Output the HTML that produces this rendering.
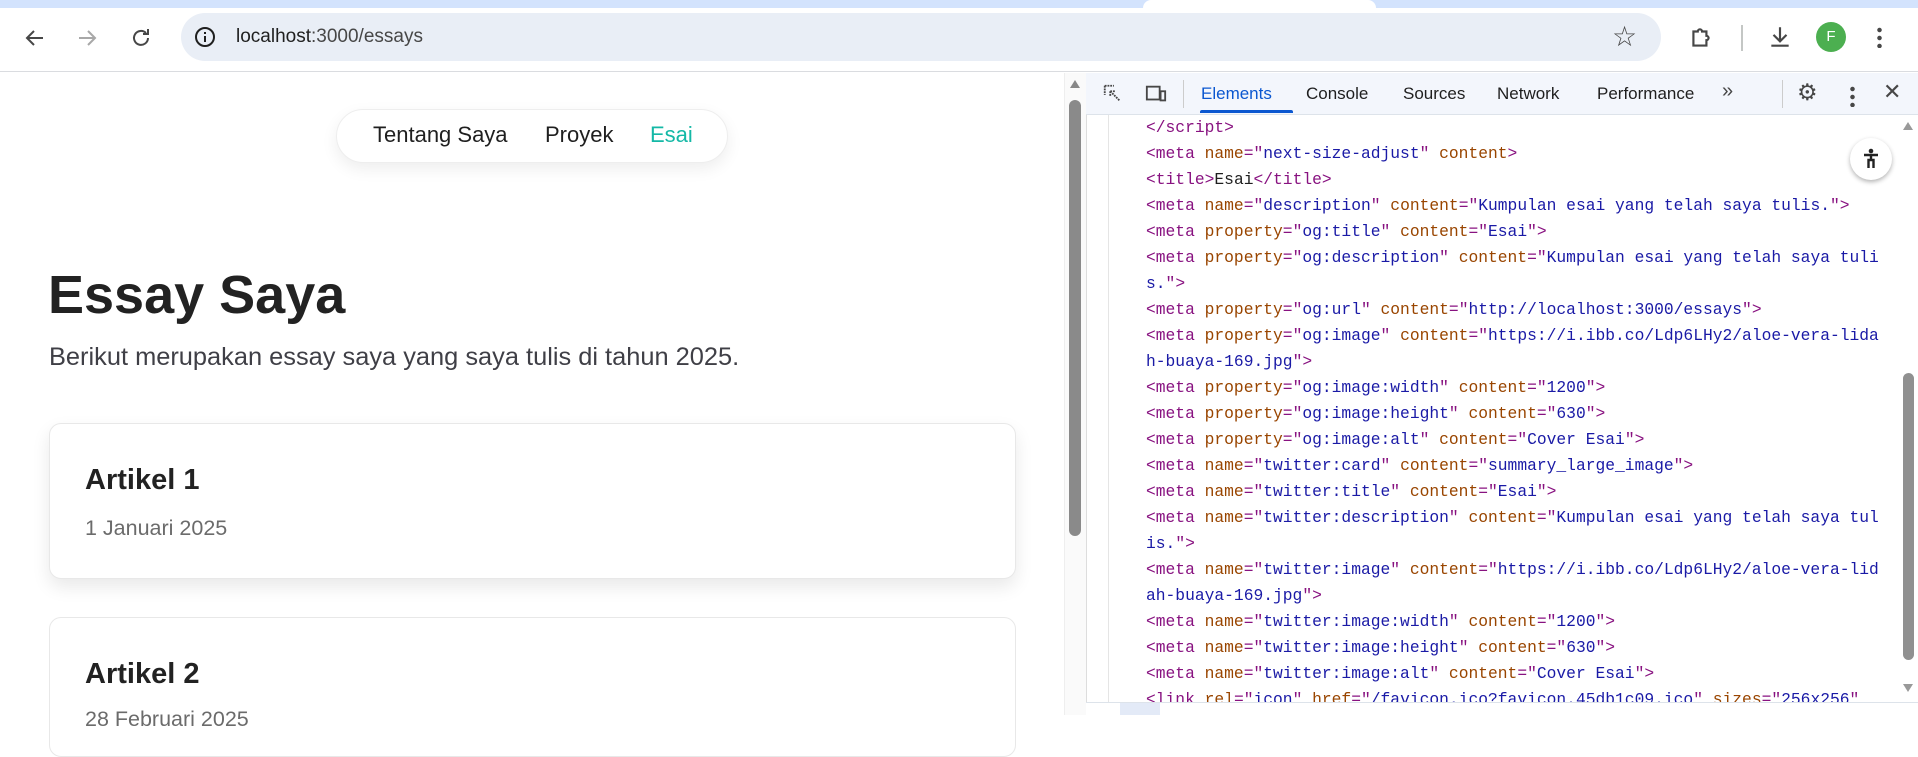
<!DOCTYPE html>
<html><head><meta charset="utf-8"><style>
*{margin:0;padding:0;box-sizing:border-box}
body{width:1918px;height:715px;overflow:hidden;background:#fff;font-family:"Liberation Sans",sans-serif;position:relative}
.abs{position:absolute}
.code{position:absolute;left:1146px;font-family:"Liberation Mono",monospace;font-size:16.3px;white-space:pre;color:#1f1f1f;line-height:26px}
.t{color:#881280}.a{color:#994500}.v{color:#1a1aa6}
.tab{position:absolute;top:84px;font-size:17px;color:#1f1f1f}
</style></head><body>
<div class="abs" style="left:0;top:0;width:1918px;height:8px;background:#d3e3fd"></div>
<div class="abs" style="left:1143px;top:0;width:233px;height:8px;background:#fff;border-radius:8px 8px 0 0"></div>
<div class="abs" style="left:0;top:8px;width:1918px;height:64px;background:#fff;border-bottom:1px solid #dadce0"></div>
<svg class="abs" style="left:20px;top:26px" width="30" height="24" viewBox="0 0 24 24"><path d="M20 12H5M11 5l-7 7 7 7" stroke="#474747" stroke-width="2" fill="none"/></svg>
<svg class="abs" style="left:72px;top:26px" width="30" height="24" viewBox="0 0 24 24"><path d="M4 12h15M13 5l7 7-7 7" stroke="#a8a8a8" stroke-width="2" fill="none"/></svg>
<svg class="abs" style="left:128px;top:26px" width="26" height="24" viewBox="0 0 24 24"><path d="M19 12a7 7 0 1 1-2-5M19 3v5h-5" stroke="#474747" stroke-width="2" fill="none"/></svg>
<div class="abs" style="left:181px;top:13px;width:1480px;height:48px;background:#e9eef6;border-radius:24px"></div>
<svg class="abs" style="left:193px;top:25px" width="24" height="24" viewBox="0 0 24 24"><circle cx="12" cy="12" r="9" stroke="#1f1f1f" stroke-width="2" fill="none"/><path d="M12 11v6M12 7v2" stroke="#1f1f1f" stroke-width="2"/></svg>
<div class="abs" style="left:236px;top:26px;font-size:19px;color:#1f1f1f">localhost<span style="color:#474747">:3000/essays</span></div>
<div class="abs" style="left:1612px;top:20px;font-size:28px;color:#474747">☆</div>
<svg class="abs" style="left:1688px;top:25px" width="26" height="26" viewBox="0 0 24 24"><path d="M5 6h4a2 2 0 0 1 4 0h4v4a2 2 0 0 1 0 4v5H5z" stroke="#474747" stroke-width="2" fill="none"/></svg>
<div class="abs" style="left:1741px;top:25px;width:2px;height:26px;background:#c4c7c5"></div>
<svg class="abs" style="left:1767px;top:24px" width="26" height="26" viewBox="0 0 24 24"><path d="M12 3v12M6 10l6 6 6-6M4 20h16" stroke="#474747" stroke-width="2" fill="none"/></svg>
<div class="abs" style="left:1816px;top:22px;width:30px;height:30px;border-radius:50%;background:#4caf50;color:#fff;font-size:15px;text-align:center;line-height:30px">F</div>
<div class="abs" style="left:1877px;top:26px;width:5px;height:22px;background:radial-gradient(circle,#474747 2px,transparent 2.5px) 0 0/5px 8px"></div>
<div class="abs" style="left:336px;top:109px;width:392px;height:54px;border-radius:27px;border:1px solid #eee;box-shadow:0 6px 16px rgba(0,0,0,.07);background:#fff"></div>
<div class="abs" style="left:373px;top:122px;font-size:22px;color:#1f1f1f">Tentang Saya</div>
<div class="abs" style="left:545px;top:122px;font-size:22px;color:#1f1f1f">Proyek</div>
<div class="abs" style="left:650px;top:122px;font-size:22px;color:#14b8a6">Esai</div>
<div class="abs" style="left:48px;top:264px;font-size:54px;font-weight:bold;color:#222">Essay Saya</div>
<div class="abs" style="left:49px;top:343px;font-size:25.4px;color:#3f3f46">Berikut merupakan essay saya yang saya tulis di tahun 2025.</div>
<div class="abs" style="left:49px;top:423px;width:967px;height:156px;border:1px solid #e8e8e8;border-radius:12px;box-shadow:0 8px 18px rgba(0,0,0,.09);background:#fff"></div>
<div class="abs" style="left:85px;top:464px;font-size:29px;font-weight:bold;color:#222">Artikel 1</div>
<div class="abs" style="left:85px;top:516px;font-size:21.5px;color:#6b6b6b">1 Januari 2025</div>
<div class="abs" style="left:49px;top:617px;width:967px;height:140px;border:1px solid #e8e8e8;border-radius:12px;background:#fff"></div>
<div class="abs" style="left:85px;top:658px;font-size:29px;font-weight:bold;color:#222">Artikel 2</div>
<div class="abs" style="left:85px;top:707px;font-size:21.5px;color:#6b6b6b">28 Februari 2025</div>
<div class="abs" style="left:1064px;top:73px;width:22px;height:642px;background:#fafafa;border-left:1px solid #eee"></div>
<div class="abs" style="left:1070px;top:80px;width:0;height:0;border-left:5px solid transparent;border-right:5px solid transparent;border-bottom:8px solid #888"></div>
<div class="abs" style="left:1069px;top:100px;width:12px;height:436px;border-radius:6px;background:#8a8a8a"></div>
<div class="abs" style="left:1086px;top:73px;width:832px;height:642px;background:#fff;border-left:1px solid #ddd"></div>
<div class="abs" style="left:1086px;top:73px;width:832px;height:42px;background:#f3f6fc;border-bottom:1px solid #dde3ea"></div>
<svg class="abs" style="left:1101px;top:83px" width="24" height="22" viewBox="0 0 24 24"><path d="M3 3h10M3 3v10M9 9l10 10M9 9h6M9 9v6" stroke="#474747" stroke-width="2" fill="none" stroke-dasharray="2 1"/></svg>
<svg class="abs" style="left:1143px;top:83px" width="26" height="22" viewBox="0 0 24 24"><rect x="2" y="4" width="14" height="14" stroke="#474747" stroke-width="2" fill="none"/><rect x="17" y="9" width="5" height="10" stroke="#474747" stroke-width="2" fill="none"/></svg>
<div class="abs" style="left:1183px;top:80px;width:1px;height:28px;background:#ccc"></div>
<div class="tab" style="left:1201px;color:#0b57d0">Elements</div>
<div class="abs" style="left:1200px;top:110px;width:93px;height:3px;background:#0b57d0;border-radius:2px 2px 0 0"></div>
<div class="tab" style="left:1306px">Console</div>
<div class="tab" style="left:1403px">Sources</div>
<div class="tab" style="left:1497px">Network</div>
<div class="tab" style="left:1597px">Performance</div>
<div class="tab" style="left:1722px;font-size:20px;top:80px;color:#474747">»</div>
<div class="abs" style="left:1782px;top:80px;width:1px;height:28px;background:#ccc"></div>
<div class="tab" style="left:1797px;top:79px;font-size:23px;color:#474747">⚙</div>
<div class="abs" style="left:1850px;top:85px;width:5px;height:22px;background:radial-gradient(circle,#474747 2px,transparent 2.5px) 0 0/5px 8px"></div>
<div class="tab" style="left:1883px;top:79px;font-size:22px;color:#474747">✕</div>
<div class="abs" style="left:1108px;top:115px;width:1px;height:588px;background:#e5e5e5"></div>
<div class="code" style="top:115px"><span class="t">&lt;/script&gt;</span>
<span class="t">&lt;meta </span><span class="a">name</span><span class="t">="</span><span class="v">next-size-adjust</span><span class="t">" </span><span class="a">content</span><span class="t">&gt;</span>
<span class="t">&lt;title&gt;</span>Esai<span class="t">&lt;/title&gt;</span>
<span class="t">&lt;meta </span><span class="a">name</span><span class="t">="</span><span class="v">description</span><span class="t">" </span><span class="a">content</span><span class="t">="</span><span class="v">Kumpulan esai yang telah saya tulis.</span><span class="t">"&gt;</span>
<span class="t">&lt;meta </span><span class="a">property</span><span class="t">="</span><span class="v">og:title</span><span class="t">" </span><span class="a">content</span><span class="t">="</span><span class="v">Esai</span><span class="t">"&gt;</span>
<span class="t">&lt;meta </span><span class="a">property</span><span class="t">="</span><span class="v">og:description</span><span class="t">" </span><span class="a">content</span><span class="t">="</span><span class="v">Kumpulan esai yang telah saya tuli</span>
<span class="v">s.</span><span class="t">"&gt;</span>
<span class="t">&lt;meta </span><span class="a">property</span><span class="t">="</span><span class="v">og:url</span><span class="t">" </span><span class="a">content</span><span class="t">="</span><span class="v">http://localhost:3000/essays</span><span class="t">"&gt;</span>
<span class="t">&lt;meta </span><span class="a">property</span><span class="t">="</span><span class="v">og:image</span><span class="t">" </span><span class="a">content</span><span class="t">="</span><span class="v">https://i.ibb.co/Ldp6LHy2/aloe-vera-lida</span>
<span class="v">h-buaya-169.jpg</span><span class="t">"&gt;</span>
<span class="t">&lt;meta </span><span class="a">property</span><span class="t">="</span><span class="v">og:image:width</span><span class="t">" </span><span class="a">content</span><span class="t">="</span><span class="v">1200</span><span class="t">"&gt;</span>
<span class="t">&lt;meta </span><span class="a">property</span><span class="t">="</span><span class="v">og:image:height</span><span class="t">" </span><span class="a">content</span><span class="t">="</span><span class="v">630</span><span class="t">"&gt;</span>
<span class="t">&lt;meta </span><span class="a">property</span><span class="t">="</span><span class="v">og:image:alt</span><span class="t">" </span><span class="a">content</span><span class="t">="</span><span class="v">Cover Esai</span><span class="t">"&gt;</span>
<span class="t">&lt;meta </span><span class="a">name</span><span class="t">="</span><span class="v">twitter:card</span><span class="t">" </span><span class="a">content</span><span class="t">="</span><span class="v">summary_large_image</span><span class="t">"&gt;</span>
<span class="t">&lt;meta </span><span class="a">name</span><span class="t">="</span><span class="v">twitter:title</span><span class="t">" </span><span class="a">content</span><span class="t">="</span><span class="v">Esai</span><span class="t">"&gt;</span>
<span class="t">&lt;meta </span><span class="a">name</span><span class="t">="</span><span class="v">twitter:description</span><span class="t">" </span><span class="a">content</span><span class="t">="</span><span class="v">Kumpulan esai yang telah saya tul</span>
<span class="v">is.</span><span class="t">"&gt;</span>
<span class="t">&lt;meta </span><span class="a">name</span><span class="t">="</span><span class="v">twitter:image</span><span class="t">" </span><span class="a">content</span><span class="t">="</span><span class="v">https://i.ibb.co/Ldp6LHy2/aloe-vera-lid</span>
<span class="v">ah-buaya-169.jpg</span><span class="t">"&gt;</span>
<span class="t">&lt;meta </span><span class="a">name</span><span class="t">="</span><span class="v">twitter:image:width</span><span class="t">" </span><span class="a">content</span><span class="t">="</span><span class="v">1200</span><span class="t">"&gt;</span>
<span class="t">&lt;meta </span><span class="a">name</span><span class="t">="</span><span class="v">twitter:image:height</span><span class="t">" </span><span class="a">content</span><span class="t">="</span><span class="v">630</span><span class="t">"&gt;</span>
<span class="t">&lt;meta </span><span class="a">name</span><span class="t">="</span><span class="v">twitter:image:alt</span><span class="t">" </span><span class="a">content</span><span class="t">="</span><span class="v">Cover Esai</span><span class="t">"&gt;</span>
<span class="t">&lt;link </span><span class="a">rel</span><span class="t">="</span><span class="v">icon</span><span class="t">" </span><span class="a">href</span><span class="t">="</span><span class="v">/favicon.ico?favicon.45db1c09.ico</span><span class="t">" </span><span class="a">sizes</span><span class="t">="</span><span class="v">256x256</span><span class="t">"</span></div>
<div class="abs" style="left:1086px;top:702px;width:832px;height:13px;background:#fff;border-top:1px solid #dde3ea"></div>
<div class="abs" style="left:1120px;top:703px;width:40px;height:12px;background:#e3eaf7"></div>
<div class="abs" style="left:1850px;top:138px;width:42px;height:42px;border-radius:50%;background:#fff;box-shadow:0 2px 5px rgba(0,0,0,.3)"></div>
<svg class="abs" style="left:1859px;top:147px" width="24" height="24" viewBox="0 0 24 24"><circle cx="12" cy="4" r="2.3" fill="#222"/><path d="M5 8h14M12 8v6M9.5 21v-8h5v8" stroke="#222" stroke-width="2.4" fill="none"/></svg>
<div class="abs" style="left:1903px;top:122px;width:0;height:0;border-left:5px solid transparent;border-right:5px solid transparent;border-bottom:8px solid #999"></div>
<div class="abs" style="left:1903px;top:373px;width:11px;height:287px;border-radius:6px;background:#909090"></div>
<div class="abs" style="left:1903px;top:684px;width:0;height:0;border-left:5px solid transparent;border-right:5px solid transparent;border-top:8px solid #999"></div>
</body></html>
